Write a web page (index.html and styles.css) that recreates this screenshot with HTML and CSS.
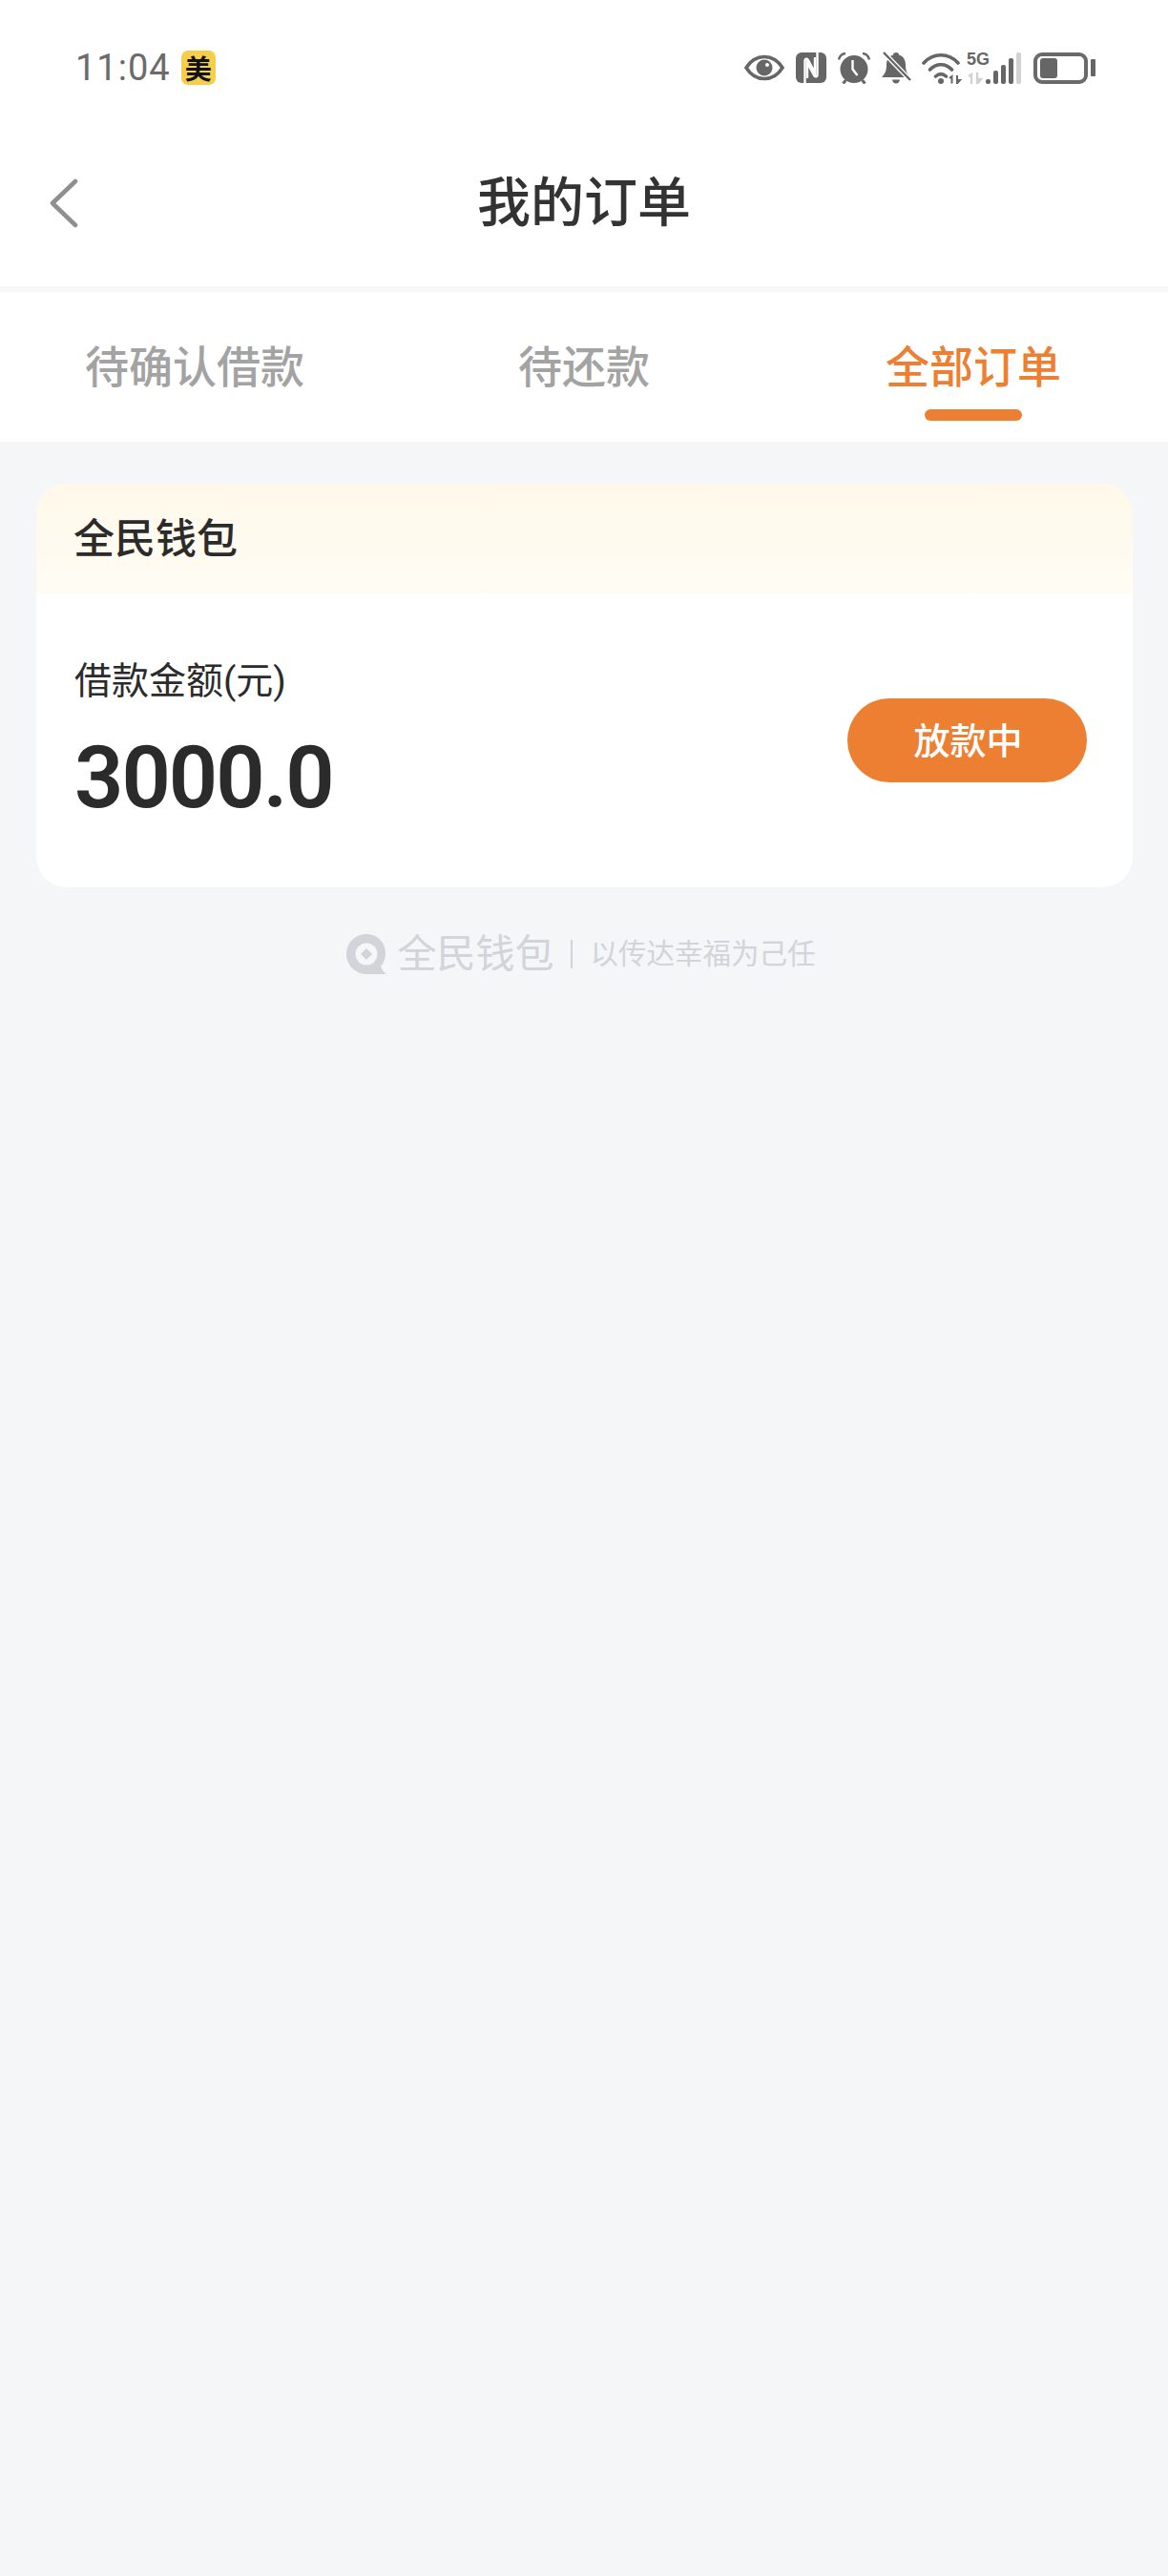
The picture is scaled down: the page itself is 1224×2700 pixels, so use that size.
FILE: index.html
```html
<!DOCTYPE html>
<html lang="zh-CN">

<head>
    <meta charset="UTF-8">
    <meta name="viewport" content="width=device-width, initial-scale=1.0">
    <title>我的订单</title>
    <link rel="stylesheet" href="styles.css">
</head>

<body>
    <div class="top">
        <div class="status">
            <div class="status-left">
                <span class="time">11:04</span>
                <span class="app-badge">美</span>
            </div>
            <div class="status-right">
                <svg class="ic-eye" width="42" height="28" viewBox="0 0 42 28">
                    <path d="M2 14C7 6 13 2.500 21 2.500S35 6 40 14C35 22 29 25.500 21 25.500S7 22 2 14Z" fill="none" stroke="#666" stroke-width="3.600" />
                    <circle cx="21" cy="14" r="8.500" fill="#666" />
                    <circle cx="24" cy="11" r="2" fill="#fff" />
                </svg>
                <svg class="ic-nfc" width="32" height="32" viewBox="0 0 32 32">
                    <rect width="32" height="32" rx="6" fill="#666" />
                    <path d="M9.500 32V8.500C9.500 6.500 11.500 6 12.500 7.500L20 21V5" fill="none" stroke="#fff" stroke-width="2.400" />
                    <path d="M22.500 0V23.500C22.500 25.500 20.500 26 19.500 24.500L12 11V27" fill="none" stroke="#fff" stroke-width="2.400" />
                </svg>
                <svg class="ic-alarm" width="34" height="33" viewBox="0 0 34 33">
                    <circle cx="17" cy="17.500" r="14.500" fill="#666" />
                    <path d="M1 7.500C2 3.500 4.500 1.300 8 1M33 7.500C32 3.500 29.500 1.300 26 1" fill="none" stroke="#666" stroke-width="2.400" />
                    <path d="M5.500 32.500L8.500 29M28.500 32.500L25.500 29" stroke="#666" stroke-width="3" />
                    <path d="M15.500 8V17.500L20.500 24" fill="none" stroke="#fff" stroke-width="2.400" />
                </svg>
                <svg class="ic-bell" width="32" height="34" viewBox="0 0 32 34">
                    <path d="M16 1C18 1 19 2 19 3.500C24 5 26 9 26 14C26 19 27 23 31 27H1C5 23 6 19 6 14C6 9 8 5 13 3.500C13 2 14 1 16 1Z" fill="#666" />
                    <path d="M12 29.500H20C19.500 32.500 17.500 33.500 16 33.500S12.500 32.500 12 29.500Z" fill="#666" />
                    <path d="M2 0L31 30" stroke="#fff" stroke-width="5" />
                    <path d="M3 1L31 30" stroke="#666" stroke-width="2.400" />
                </svg>
                <svg class="ic-wifi" width="42" height="34" viewBox="0 0 42 34">
                    <path d="M2 12C12 1 28 1 38 12M8.500 19C15 12 25 12 31.500 19M14.500 26C18 23 22 23 25.500 26" fill="none" stroke="#666" stroke-width="3.600" stroke-linecap="round" />
                    <circle cx="20" cy="31" r="3" fill="#666" />
                    <path d="M29 28L31.500 26V33.500M37 25V33.500L40 30H37" fill="none" stroke="#666" stroke-width="2" />
                </svg>
                <div class="signal">
                    <div class="net">
                        <span class="net-name">5G</span>
                        <svg width="18" height="12" viewBox="0 0 18 12">
                            <path d="M2 4L5 2V12M11 0V12L15 7H11" fill="none" stroke="#d2d2d2" stroke-width="2.400" />
                        </svg>
                    </div>
                    <div class="bars">
                        <i class="bar b1"></i>
                        <i class="bar b2"></i>
                        <i class="bar b3"></i>
                        <i class="bar b4"></i>
                        <i class="bar b5"></i>
                    </div>
                </div>
                <div class="battery">
                    <div class="battery-body"><div class="battery-level"></div></div>
                    <div class="battery-cap"></div>
                </div>
            </div>
        </div>
        <div class="nav">
            <svg class="back" width="30" height="52" viewBox="0 0 30 52">
                <path d="M27 3L3 26L27 49" fill="none" stroke="#8f8f8f" stroke-width="4.600" stroke-linecap="round" stroke-linejoin="round" />
            </svg>
            <h1 class="nav-title">我的订单</h1>
        </div>
    </div>

    <div class="tabs">
        <div class="tab">待确认借款</div>
        <div class="tab">待还款</div>
        <div class="tab active">全部订单<span class="tab-line"></span></div>
    </div>

    <main class="content">
        <section class="order">
            <div class="order-head">全民钱包</div>
            <div class="order-body">
                <div>
                    <div class="amount-label">借款金额(元)</div>
                    <div class="amount">3000.0</div>
                </div>
                <div class="order-state">放款中</div>
            </div>
        </section>

        <div class="brand">
            <svg class="brand-logo" width="42" height="42" viewBox="0 0 42 42">
                <path d="M21 0C32.500 0 41 9 41 20C41 26 39 30 36 34C37 37 39 40 42 42H21C9.500 42 0 32.500 0 21S9.500 0 21 0Z" fill="#d1d4d9" />
                <circle cx="21" cy="21" r="11.500" fill="#f4f6f8" />
                <path d="M21 15L27 21L21 27L15 21Z" fill="#d1d4d9" />
            </svg>
            <span class="brand-name">全民钱包</span>
            <span class="brand-sep"></span>
            <span class="brand-slogan">以传达幸福为己任</span>
        </div>
    </main>
</body>

</html>
```

FILE: styles.css
```css
* {
    box-sizing: border-box;
}

body {
    margin: 0;
    min-height: 2700px;
    background: #f4f6f8;
    font-family: "Roboto", "Noto Sans CJK SC", sans-serif;
}

.top {
    background: #fff;
    padding-bottom: 16px;
}

.status {
    height: 142px;
    padding: 0 76px 0 79px;
    display: flex;
    align-items: center;
    justify-content: space-between;
}

.status-left {
    display: flex;
    align-items: center;
    gap: 11px;
}

.time {
    font-size: 38px;
    line-height: 44px;
    letter-spacing: 1px;
    color: #6b6b6b;
}

.app-badge {
    width: 36px;
    height: 36px;
    border-radius: 7px;
    background: #f5cf4a;
    color: #111;
    font-size: 28px;
    line-height: 36px;
    text-align: center;
    font-family: "Noto Sans CJK SC", sans-serif;
    font-weight: 700;
}

.status-right {
    display: flex;
    align-items: center;
}

.ic-eye {
    margin-right: 12px;
}

.ic-nfc {
    margin-right: 12px;
}

.ic-alarm {
    margin-right: 11px;
}

.ic-bell {
    margin-right: 11px;
}

.ic-wifi {
    margin-right: 5px;
}

.signal {
    display: flex;
    align-items: flex-end;
    height: 34px;
    margin-right: 13px;
}

.net {
    width: 20px;
    display: flex;
    flex-direction: column;
    justify-content: space-between;
    height: 34px;
}

.net-name {
    font-size: 18px;
    line-height: 16px;
    font-weight: 700;
    color: #666;
    font-family: "Liberation Sans Narrow", "Liberation Sans", sans-serif;
}

.bars {
    display: flex;
    align-items: flex-end;
    gap: 3px;
}

.bar {
    width: 5px;
    border-radius: 2px;
    background: #666;
}

.b1 {
    height: 5px;
}

.b2 {
    height: 14px;
}

.b3 {
    height: 20px;
}

.b4 {
    height: 27px;
}

.b5 {
    height: 33px;
    background: #d2d2d2;
}

.battery {
    display: flex;
    align-items: center;
    gap: 3px;
}

.battery-body {
    width: 57px;
    height: 33px;
    padding: 2px 3px;
    border: 4px solid #6a6a6a;
    border-radius: 9px;
}

.battery-level {
    width: 18px;
    height: 100%;
    border-radius: 3px;
    background: #666;
}

.battery-cap {
    width: 5px;
    height: 18px;
    border-radius: 1px;
    background: #666;
}

.nav {
    height: 142px;
    padding-left: 52px;
    display: flex;
    align-items: center;
    position: relative;
}

.nav-title {
    margin: 0;
    position: absolute;
    left: 0;
    right: 0;
    top: 35px;
    text-align: center;
    font-size: 56px;
    line-height: 72px;
    font-weight: 500;
    color: #333;
}

.tabs {
    height: 163px;
    border-top: 6px solid #f7f7f7;
    background: #fff;
    display: grid;
    grid-template-columns: repeat(3, 1fr);
}

.tab {
    padding-top: 49px;
    display: flex;
    flex-direction: column;
    align-items: center;
    font-size: 46px;
    line-height: 60px;
    font-weight: 500;
    color: #a3a3a3;
}

.tab.active {
    color: #ed7f33;
}

.tab-line {
    width: 102px;
    height: 12px;
    margin-top: 14px;
    border-radius: 6px;
    background: #ed7f33;
}

.content {
    padding: 44px 37px 0 38px;
}

.order {
    border-radius: 32px;
    background: #fff;
    overflow: hidden;
}

.order-head {
    height: 115px;
    padding-left: 39px;
    background: linear-gradient(#fff8ea, #fffcf4);
    font-size: 43px;
    line-height: 116px;
    font-weight: 500;
    color: #2b2b2b;
}

.order-body {
    height: 308px;
    padding: 0 48px 0 40px;
    display: flex;
    align-items: center;
    justify-content: space-between;
}

.amount-label {
    font-size: 39px;
    line-height: 56px;
    color: #2b2b2b;
}

.amount {
    margin-top: 24px;
    font-size: 90px;
    line-height: 100px;
    font-weight: 600;
    letter-spacing: -2px;
    color: #2b2b2b;
}

.order-state {
    width: 251px;
    height: 88px;
    padding-left: 2px;
    border-radius: 44px;
    background: #ed7f33;
    color: #fff;
    font-size: 38px;
    line-height: 90px;
    font-weight: 500;
    text-align: center;
}

.brand {
    margin-top: 48px;
    padding-right: 7px;
    display: flex;
    align-items: center;
    justify-content: center;
    color: #d1d4d9;
}

.brand-name {
    margin-left: 11px;
    font-size: 41px;
    line-height: 44px;
    font-weight: 400;
}

.brand-sep {
    width: 2px;
    height: 30px;
    margin: 0 18px;
    background: #d1d4d9;
}

.brand-slogan {
    font-size: 29.500px;
    line-height: 44px;
}
```
